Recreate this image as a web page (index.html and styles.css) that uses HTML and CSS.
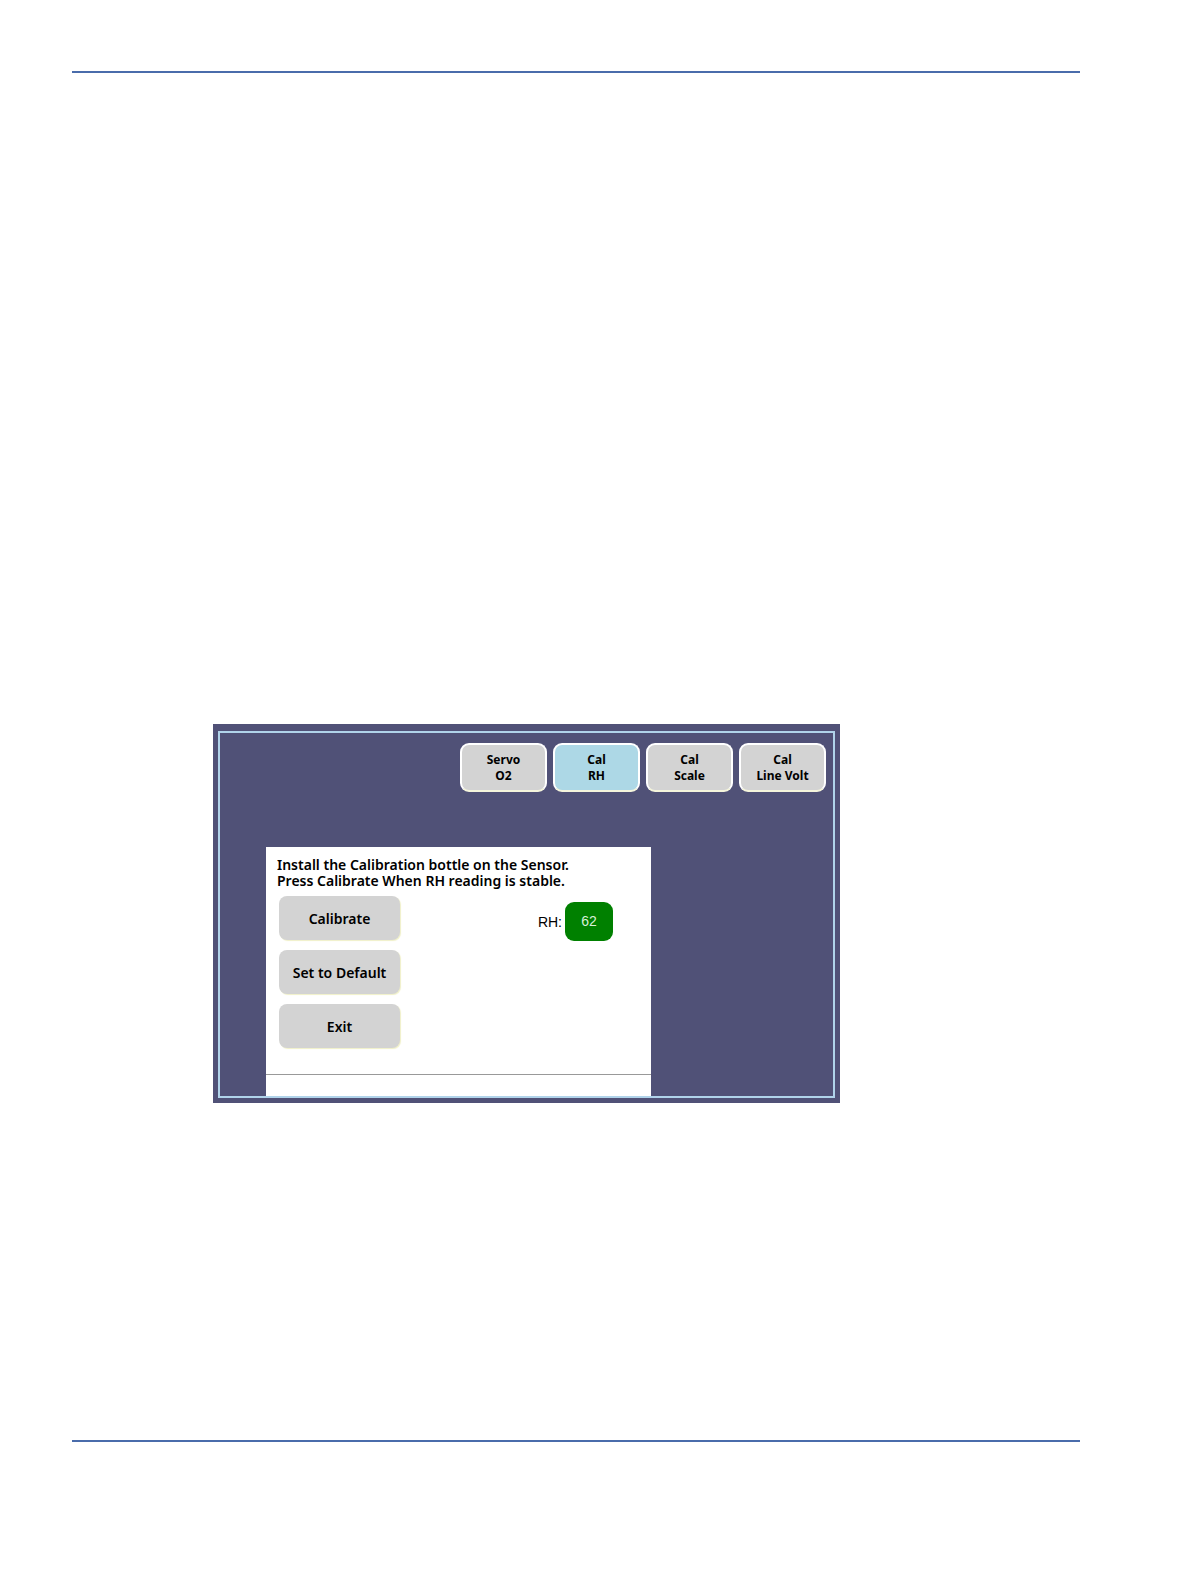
FILE: index.html
```
<!DOCTYPE html>
<html lang="en">
<head>
    <meta charset="UTF-8">
    <meta name="viewport" content="width=device-width, initial-scale=1.0">
    <title>RH Calibration</title>
    <link rel="stylesheet" href="styles.css">
</head>
<body>
    <main class="page">
        <div class="screen">
            <div class="screen-frame">
                <nav class="tabs">
                    <button type="button" class="tab">Servo<br>O2</button>
                    <button type="button" class="tab active">Cal<br>RH</button>
                    <button type="button" class="tab">Cal<br>Scale</button>
                    <button type="button" class="tab">Cal<br>Line Volt</button>
                </nav>

                <section class="panel">
                    <p class="instructions">
                        Install the Calibration bottle on the Sensor.<br>
                        Press Calibrate When RH reading is stable.
                    </p>
                    <div class="controls">
                        <div class="actions">
                            <button type="button" class="action">Calibrate</button>
                            <button type="button" class="action">Set to Default</button>
                            <button type="button" class="action">Exit</button>
                        </div>
                        <div class="reading">
                            <label for="rh">RH:</label>
                            <output id="rh" class="value">62</output>
                        </div>
                    </div>
                    <div class="status"></div>
                </section>
            </div>
        </div>
    </main>
</body>
</html>
```
FILE: styles.css
```
* {
    box-sizing: border-box;
}

body {
    margin: 0;
    padding: 71px 108px 142px 72px;
    min-height: 100vh;
    display: flex;
    background-color: #fff;
    color: #000;
    font-family: "Noto Sans", sans-serif;
    font-size: 14px;
}

.page {
    flex: 1;
    padding: 651px 240px 0 141px;
    border-top: 2px solid #4a6cab;
    border-bottom: 2px solid #4a6cab;
}

/* Device screen */
.screen {
    padding: 7px 5px 5px;
    background-color: #505177;
}

.screen-frame {
    border: 2px solid #b0d3ea;
}

.tabs {
    display: flex;
    justify-content: flex-end;
    gap: 6px;
    padding: 10px 7px 0;
}

.tab {
    width: 87px;
    height: 49px;
    padding: 0;
    border: 2px solid #fff;
    border-bottom-color: #f5f5dc;
    border-radius: 9px;
    background-color: #d3d3d3;
    color: #000;
    font-family: inherit;
    font-size: 12px;
    font-weight: bold;
    line-height: 16px;
    cursor: pointer;
}

.tab.active {
    background-color: #add8e6;
}

/* Calibration panel */
.panel {
    margin: 55px 182px 0 46px;
    background-color: #fff;
}

.instructions {
    margin: 0;
    padding: 10px 11px 6px;
    font-weight: 600;
    font-size: 14px;
    line-height: 16px;
    white-space: nowrap;
}

.controls {
    display: flex;
    justify-content: space-between;
    align-items: flex-start;
    padding: 1px 38px 26px 13px;
}

.actions {
    display: flex;
    flex-direction: column;
    gap: 10px;
}

.action {
    width: 121px;
    height: 44px;
    padding: 0;
    border: none;
    border-radius: 8px;
    background-color: #d3d3d3;
    box-shadow: 1px 1px 1px #f0f0c8;
    color: #000;
    font-family: inherit;
    font-size: 14px;
    font-weight: 600;
    cursor: pointer;
}

.reading {
    display: flex;
    align-items: center;
    gap: 3px;
    padding-top: 6px;
    font-family: "Liberation Sans", sans-serif;
}

.value {
    width: 48px;
    height: 39px;
    border-radius: 9px;
    background-color: #008000;
    color: #d8f0d8;
    line-height: 39px;
    text-align: center;
}

.status {
    height: 22px;
    border-top: 1px solid #999;
}
```
